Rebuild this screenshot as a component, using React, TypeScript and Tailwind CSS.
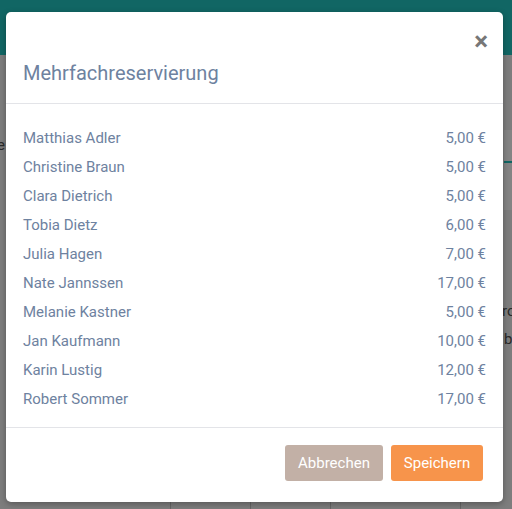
const rows = [
  { name: "Matthias Adler", price: "5,00 €" },
  { name: "Christine Braun", price: "5,00 €" },
  { name: "Clara Dietrich", price: "5,00 €" },
  { name: "Tobia Dietz", price: "6,00 €" },
  { name: "Julia Hagen", price: "7,00 €" },
  { name: "Nate Jannssen", price: "17,00 €" },
  { name: "Melanie Kastner", price: "5,00 €" },
  { name: "Jan Kaufmann", price: "10,00 €" },
  { name: "Karin Lustig", price: "12,00 €" },
  { name: "Robert Sommer", price: "17,00 €" },
];

export default function App() {
  return (
    <div
      className="relative w-[512px] h-[509px] overflow-hidden bg-[#7d7d7d]"
      style={{ fontFamily: "Roboto, 'Liberation Sans', sans-serif" }}
    >
      {/* page behind the overlay */}
      <div className="h-[55px] bg-[#116664]" />
      <div className="absolute left-[-3px] top-[134px] text-[15px] text-[#2a2a2a]">e</div>
      <div className="absolute left-[504px] top-[130px] w-[10px] h-[80px] bg-[#848484]" />
      <div className="absolute left-[504px] top-[161px] w-[10px] h-[2px] bg-[#116664]" />
      <div className="absolute left-[502px] top-[300px] text-[15px] text-[#2a2a2a]">ro</div>
      <div className="absolute left-[504px] top-[328px] text-[15px] text-[#2a2a2a]">b</div>
      <div className="absolute left-[170px] top-[500px] w-px h-[10px] bg-[#666]" />
      <div className="absolute left-[250px] top-[500px] w-px h-[10px] bg-[#666]" />
      <div className="absolute left-[330px] top-[500px] w-px h-[10px] bg-[#666]" />
      <div className="absolute left-[460px] top-[500px] w-px h-[10px] bg-[#666]" />

      {/* modal */}
      <div className="absolute left-[6px] top-[12px] w-[497px] h-[490px] bg-white rounded-[5px] shadow-[0_2px_6px_rgba(0,0,0,0.3)] flex flex-col">
        <div className="px-[17px] pt-[16px] pb-[18px] border-b border-[#e3e4e8]">
          <div className="flex justify-end h-[26px]">
            <span className="-mr-[2px] text-[26px] leading-[26px] font-bold text-[#777]">×</span>
          </div>
          <h4 className="mt-[7px] text-[20px] leading-[24px] text-[#6e82a0]">Mehrfachreservierung</h4>
        </div>
        <div className="px-[17px] pt-[20px] pb-[13px] border-b border-[#e3e4e8]">
          {rows.map((r) => (
            <div key={r.name} className="flex justify-between h-[29px] items-center text-[15px] text-[#6e82a0]">
              <span>{r.name}</span>
              <span>{r.price}</span>
            </div>
          ))}
        </div>
        <div className="flex justify-end gap-[8px] px-[20px] pt-[17px]">
          <button className="h-[36px] w-[98px] rounded-[3px] bg-[#c2b0a6] text-white text-[15px]">Abbrechen</button>
          <button className="h-[36px] w-[92px] rounded-[3px] bg-[#f7944b] text-white text-[15px]">Speichern</button>
        </div>
      </div>
    </div>
  );
}
